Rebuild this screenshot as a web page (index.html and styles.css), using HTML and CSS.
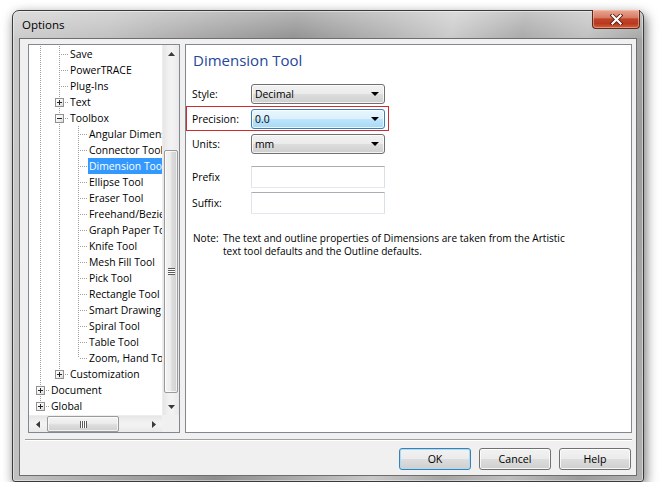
FILE: index.html
```html
<!DOCTYPE html>
<html>
<head>
<meta charset="utf-8">
<link rel="stylesheet" href="styles.css">
</head>
<body>
<div class="window">
  <div class="titlebar">
    <span class="title">Options</span>
    <div class="close">
      <svg width="13" height="11" viewBox="0 0 13 11"><path d="M2.5 1.5 L10.5 9.5 M10.5 1.5 L2.5 9.5" stroke="#4a1208" stroke-width="3.8" stroke-linecap="square"/><path d="M2.5 1.5 L10.5 9.5 M10.5 1.5 L2.5 9.5" stroke="#fff" stroke-width="2.2" stroke-linecap="square"/></svg>
    </div>
  </div>
  <div class="client">
    <div class="main">
      <div class="tree">
        <div class="tree-view">
          <div class="row"><i class="g v"></i><i class="g t"></i><span class="lbl">Save</span></div>
          <div class="row"><i class="g v"></i><i class="g t"></i><span class="lbl">PowerTRACE</span></div>
          <div class="row"><i class="g v"></i><i class="g t"></i><span class="lbl">Plug-Ins</span></div>
          <div class="row"><i class="g v"></i><i class="g t"><b class="exp plus"></b></i><span class="lbl">Text</span></div>
          <div class="row"><i class="g v"></i><i class="g t"><b class="exp"></b></i><span class="lbl">Toolbox</span></div>
          <div class="row"><i class="g v"></i><i class="g v"></i><i class="g t"></i><span class="lbl">Angular Dimension Tool</span></div>
          <div class="row"><i class="g v"></i><i class="g v"></i><i class="g t"></i><span class="lbl">Connector Tool</span></div>
          <div class="row"><i class="g v"></i><i class="g v"></i><i class="g t"></i><span class="lbl sel">Dimension Tool</span></div>
          <div class="row"><i class="g v"></i><i class="g v"></i><i class="g t"></i><span class="lbl">Ellipse Tool</span></div>
          <div class="row"><i class="g v"></i><i class="g v"></i><i class="g t"></i><span class="lbl">Eraser Tool</span></div>
          <div class="row"><i class="g v"></i><i class="g v"></i><i class="g t"></i><span class="lbl">Freehand/Bezier Tool</span></div>
          <div class="row"><i class="g v"></i><i class="g v"></i><i class="g t"></i><span class="lbl">Graph Paper Tool</span></div>
          <div class="row"><i class="g v"></i><i class="g v"></i><i class="g t"></i><span class="lbl">Knife Tool</span></div>
          <div class="row"><i class="g v"></i><i class="g v"></i><i class="g t"></i><span class="lbl">Mesh Fill Tool</span></div>
          <div class="row"><i class="g v"></i><i class="g v"></i><i class="g t"></i><span class="lbl">Pick Tool</span></div>
          <div class="row"><i class="g v"></i><i class="g v"></i><i class="g t"></i><span class="lbl">Rectangle Tool</span></div>
          <div class="row"><i class="g v"></i><i class="g v"></i><i class="g t"></i><span class="lbl">Smart Drawing Tool</span></div>
          <div class="row"><i class="g v"></i><i class="g v"></i><i class="g t"></i><span class="lbl">Spiral Tool</span></div>
          <div class="row"><i class="g v"></i><i class="g v"></i><i class="g t"></i><span class="lbl">Table Tool</span></div>
          <div class="row"><i class="g v"></i><i class="g v"></i><i class="g l"></i><span class="lbl">Zoom, Hand Tool</span></div>
          <div class="row"><i class="g v"></i><i class="g l"><b class="exp plus"></b></i><span class="lbl">Customization</span></div>
          <div class="row"><i class="g t"><b class="exp plus"></b></i><span class="lbl">Document</span></div>
          <div class="row"><i class="g l"><b class="exp plus"></b></i><span class="lbl">Global</span></div>
        </div>
        <div class="vscroll">
          <div class="sbtn"><svg width="7" height="4" viewBox="0 0 7 4"><path d="M0 4 L3.5 0 L7 4 Z" fill="#3a3a3a"/></svg></div>
          <div class="vtrack">
            <div class="vthumb"><span class="grip-v"></span></div>
          </div>
          <div class="sbtn"><svg width="7" height="4" viewBox="0 0 7 4"><path d="M0 0 L3.5 4 L7 0 Z" fill="#3a3a3a"/></svg></div>
        </div>
        <div class="hscroll">
          <div class="sbtn"><svg width="4" height="7" viewBox="0 0 4 7"><path d="M4 0 L0 3.5 L4 7 Z" fill="#3a3a3a"/></svg></div>
          <div class="htrack">
            <div class="hthumb"><span class="grip-h"></span></div>
          </div>
          <div class="sbtn"><svg width="4" height="7" viewBox="0 0 4 7"><path d="M0 0 L4 3.5 L0 7 Z" fill="#3a3a3a"/></svg></div>
        </div>
        <div class="corner"></div>
      </div>
      <div class="page">
        <div class="ptitle">Dimension Tool</div>
        <div class="form">
          <div class="frow">
            <span class="flabel">Style:</span>
            <div class="combo"><span>Decimal</span><svg width="8" height="4" viewBox="0 0 8 4"><path d="M0 0 L8 0 L4 4 Z" fill="#000"/></svg></div>
          </div>
          <div class="frow hl">
            <span class="flabel">Precision:</span>
            <div class="combo hot"><span>0.0</span><svg width="8" height="4" viewBox="0 0 8 4"><path d="M0 0 L8 0 L4 4 Z" fill="#000"/></svg></div>
          </div>
          <div class="frow">
            <span class="flabel">Units:</span>
            <div class="combo"><span>mm</span><svg width="8" height="4" viewBox="0 0 8 4"><path d="M0 0 L8 0 L4 4 Z" fill="#000"/></svg></div>
          </div>
          <div class="irow first">
            <span class="flabel">Prefix</span>
            <div class="input"></div>
          </div>
          <div class="irow">
            <span class="flabel">Suffix:</span>
            <div class="input"></div>
          </div>
        </div>
        <div class="note">
          <span class="note-k">Note:</span>
          <span class="note-t">The text and outline properties of Dimensions are taken from the Artistic<br>text tool defaults and the Outline defaults.</span>
        </div>
      </div>
    </div>
    <div class="sep"></div>
    <div class="buttons">
      <button class="btn def">OK</button>
      <button class="btn">Cancel</button>
      <button class="btn">Help</button>
    </div>
  </div>
</div>
</body>
</html>
```

FILE: styles.css
```css
html, body {
  margin: 0;
  background: #ffffff;
}
body {
  font-family: "Open Sans", "Noto Sans", sans-serif;
  font-size: 10.4px;
  color: #000;
  padding-top: 10px;
  padding-left: 12px;
}

.window {
  width: 632px;
  height: 472px;
  box-sizing: border-box;
  border: 1px solid #3a3a3a;
  border-radius: 7px 7px 3px 3px;
  padding: 0 6px 5px 6px;
  display: flex;
  flex-direction: column;
  background:
    linear-gradient(to bottom, rgba(255,255,255,0.35) 0, rgba(255,255,255,0.05) 27px, rgba(255,255,255,0) 27px),
    linear-gradient(100deg, #cacaca 0%, #bebebe 14%, #a2a2a2 28%, #8e8e8e 40%, #b2b2b2 54%, #c8c8c8 62%, #a6a6a6 72%, #bebebe 81%, #9c9c9c 91%, #b2b2b2 100%);
  box-shadow: 2px 4px 12px rgba(0,0,0,0.55), inset 0 0 0 1px rgba(255,255,255,0.45);
}

.titlebar {
  height: 27px;
  flex: none;
  display: flex;
  justify-content: space-between;
  align-items: flex-start;
  margin-right: -3px;
}
.title {
  margin-left: 3px;
  padding-top: 6px;
  font-size: 11.5px;
  line-height: 15px;
  color: #000;
}
.close {
  width: 48px;
  height: 19px;
  box-sizing: border-box;
  margin-top: -1px;
  border: 1px solid #5a2a20;
  border-top: none;
  border-radius: 0 0 4px 4px;
  background: linear-gradient(to bottom, #e9a795 0%, #d77c64 42%, #c0442a 50%, #b9391f 75%, #d0613c 100%);
  box-shadow: inset 0 0 0 1px rgba(255,200,180,0.5);
  display: flex;
  align-items: center;
  justify-content: center;
}

.client {
  flex: 1;
  background: #f0f0f0;
  border: 1px solid #6e6e6e;
  padding: 5px 4px 5px 8px;
  display: flex;
  flex-direction: column;
}

.main {
  height: 389px;
  display: flex;
  gap: 5px;
}

/* ---- Tree ---- */
.tree {
  width: 152px;
  box-sizing: border-box;
  border: 1px solid #828790;
  background: #fff;
  display: grid;
  grid-template-columns: 133px 17px;
  grid-template-rows: 370px 17px;
}
.tree-view {
  overflow: hidden;
  padding: 1px 0 0 2px;
  white-space: nowrap;
}
.row {
  display: flex;
  height: 16px;
}
.g {
  width: 19px;
  height: 16px;
  flex: none;
  display: flex;
  align-items: center;
  background-repeat: no-repeat;
}
.v {
  background-image: repeating-linear-gradient(to bottom, #a0a0a0 0 1px, transparent 1px 2px);
  background-size: 1px 16px;
  background-position: 9px 0;
}
.t {
  background-image:
    repeating-linear-gradient(to bottom, #a0a0a0 0 1px, transparent 1px 2px),
    repeating-linear-gradient(to right, #a0a0a0 0 1px, transparent 1px 2px);
  background-size: 1px 16px, 9px 1px;
  background-position: 9px 0, 11px 8px;
}
.l {
  background-image:
    repeating-linear-gradient(to bottom, #a0a0a0 0 1px, transparent 1px 2px),
    repeating-linear-gradient(to right, #a0a0a0 0 1px, transparent 1px 2px);
  background-size: 1px 8px, 9px 1px;
  background-position: 9px 0, 11px 8px;
}
.exp {
  width: 9px;
  height: 9px;
  box-sizing: border-box;
  margin-left: 5px;
  border: 1px solid #919191;
  background:
    linear-gradient(#222, #222) center / 5px 1px no-repeat,
    linear-gradient(135deg, #ffffff 0%, #f0f0f0 60%, #d8d8d8 100%);
}
.exp.plus {
  background:
    linear-gradient(#222, #222) center / 5px 1px no-repeat,
    linear-gradient(#222, #222) center / 1px 5px no-repeat,
    linear-gradient(135deg, #ffffff 0%, #f0f0f0 60%, #d8d8d8 100%);
}
.lbl {
  padding: 0 1px 0 1px;
  line-height: 16px;
  height: 16px;
}
.lbl.sel {
  background: #3399ff;
  color: #fff;
}

.vscroll {
  display: flex;
  flex-direction: column;
  background: linear-gradient(to right, #e6e6e6, #f2f2f2 40%, #f2f2f2 60%, #e9e9e9);
  border-left: 1px solid #ededed;
}
.sbtn {
  flex: none;
  width: 17px;
  height: 17px;
  display: flex;
  align-items: center;
  justify-content: center;
}
.vscroll .sbtn { width: auto; }
.vtrack {
  flex: 1;
  padding-top: 88px;
}
.vthumb {
  height: 243px;
  box-sizing: border-box;
  margin: 0 1px 0 1px;
  border: 1px solid #9a9a9a;
  border-radius: 2px;
  background: linear-gradient(to right, #f4f4f4 0%, #ececec 45%, #dedede 55%, #cfcfcf 100%);
  box-shadow: inset 0 0 0 1px rgba(255,255,255,0.7);
  display: flex;
  align-items: center;
  justify-content: center;
}
.grip-v {
  width: 7px;
  height: 7px;
  background: repeating-linear-gradient(to bottom, #5a5a5a 0 1px, #ffffff 1px 2px);
}

.hscroll {
  display: flex;
  background: linear-gradient(to bottom, #e6e6e6, #f2f2f2 40%, #f2f2f2 60%, #e9e9e9);
  border-top: 1px solid #ededed;
}
.htrack {
  flex: 1;
  padding-left: 1px;
}
.hthumb {
  width: 72px;
  height: 100%;
  box-sizing: border-box;
  border: 1px solid #9a9a9a;
  border-radius: 2px;
  background: linear-gradient(to bottom, #f4f4f4 0%, #ececec 45%, #dedede 55%, #cfcfcf 100%);
  box-shadow: inset 0 0 0 1px rgba(255,255,255,0.7);
  display: flex;
  align-items: center;
  justify-content: center;
}
.grip-h {
  width: 7px;
  height: 7px;
  background: repeating-linear-gradient(to right, #5a5a5a 0 1px, #ffffff 1px 2px);
}
.corner {
  background: #f0f0f0;
}

/* ---- Page ---- */
.page {
  flex: 1;
  box-sizing: border-box;
  border: 1px solid #828790;
  background: #fff;
  padding-top: 5px;
}
.ptitle {
  padding-left: 7px;
  font-size: 15px;
  line-height: 20px;
  color: #24479a;
}
.form {
  margin-top: 11px;
}
.frow {
  height: 25px;
  width: 203px;
  box-sizing: border-box;
  border: 1px solid transparent;
  padding-left: 5px;
  display: flex;
  align-items: center;
  line-height: 14px;
}
.frow.hl {
  border-color: #cf2a30;
}
.flabel {
  width: 59px;
  flex: none;
}
.combo {
  width: 134px;
  height: 20px;
  box-sizing: border-box;
  border: 1px solid #707070;
  border-radius: 3px;
  padding: 0 5px 0 3px;
  display: flex;
  align-items: center;
  justify-content: space-between;
  background: linear-gradient(to bottom, #f2f2f2 0%, #ebebeb 50%, #dddddd 50%, #cfcfcf 100%);
  box-shadow: inset 0 0 0 1px rgba(255,255,255,0.75);
}
.combo.hot {
  border-color: #3c7fb1;
  background: linear-gradient(to bottom, #eaf6fd 0%, #d9f0fc 50%, #bee6fd 50%, #a7d9f5 100%);
}
.irow {
  height: 22px;
  padding-left: 6px;
  display: flex;
  align-items: center;
  margin-top: 4px;
  line-height: 14px;
}
.irow.first {
  margin-top: 10px;
}
.input {
  width: 134px;
  height: 22px;
  box-sizing: border-box;
  border: 1px solid;
  border-color: #abadb3 #dbdfe6 #e3e9ef #e2e3ea;
  background: #fff;
}
.note {
  margin-top: 18px;
  padding-left: 7px;
  display: flex;
  font-size: 10.1px;
  line-height: 13px;
}
.note-k {
  width: 30px;
  flex: none;
}

/* ---- Bottom ---- */
.sep {
  height: 0;
  margin: 6px 0 0 -3px;
  border-top: 1px solid #a0a0a0;
  border-bottom: 1px solid #ffffff;
}
.buttons {
  margin-top: 7px;
  display: flex;
  justify-content: flex-end;
  gap: 8px;
  padding-right: 1px;
}
.btn {
  width: 72px;
  height: 22px;
  box-sizing: border-box;
  border: 1px solid #707070;
  border-radius: 3px;
  background: linear-gradient(to bottom, #f2f2f2 0%, #ebebeb 50%, #dddddd 50%, #cfcfcf 100%);
  box-shadow: inset 0 0 0 1px rgba(255,255,255,0.8);
  font-family: inherit;
  font-size: 10.6px;
  color: #000;
  padding: 0;
}
.btn.def {
  border-color: #3c7fb1;
  box-shadow: inset 0 0 0 1px #a9dcf7;
}
```
